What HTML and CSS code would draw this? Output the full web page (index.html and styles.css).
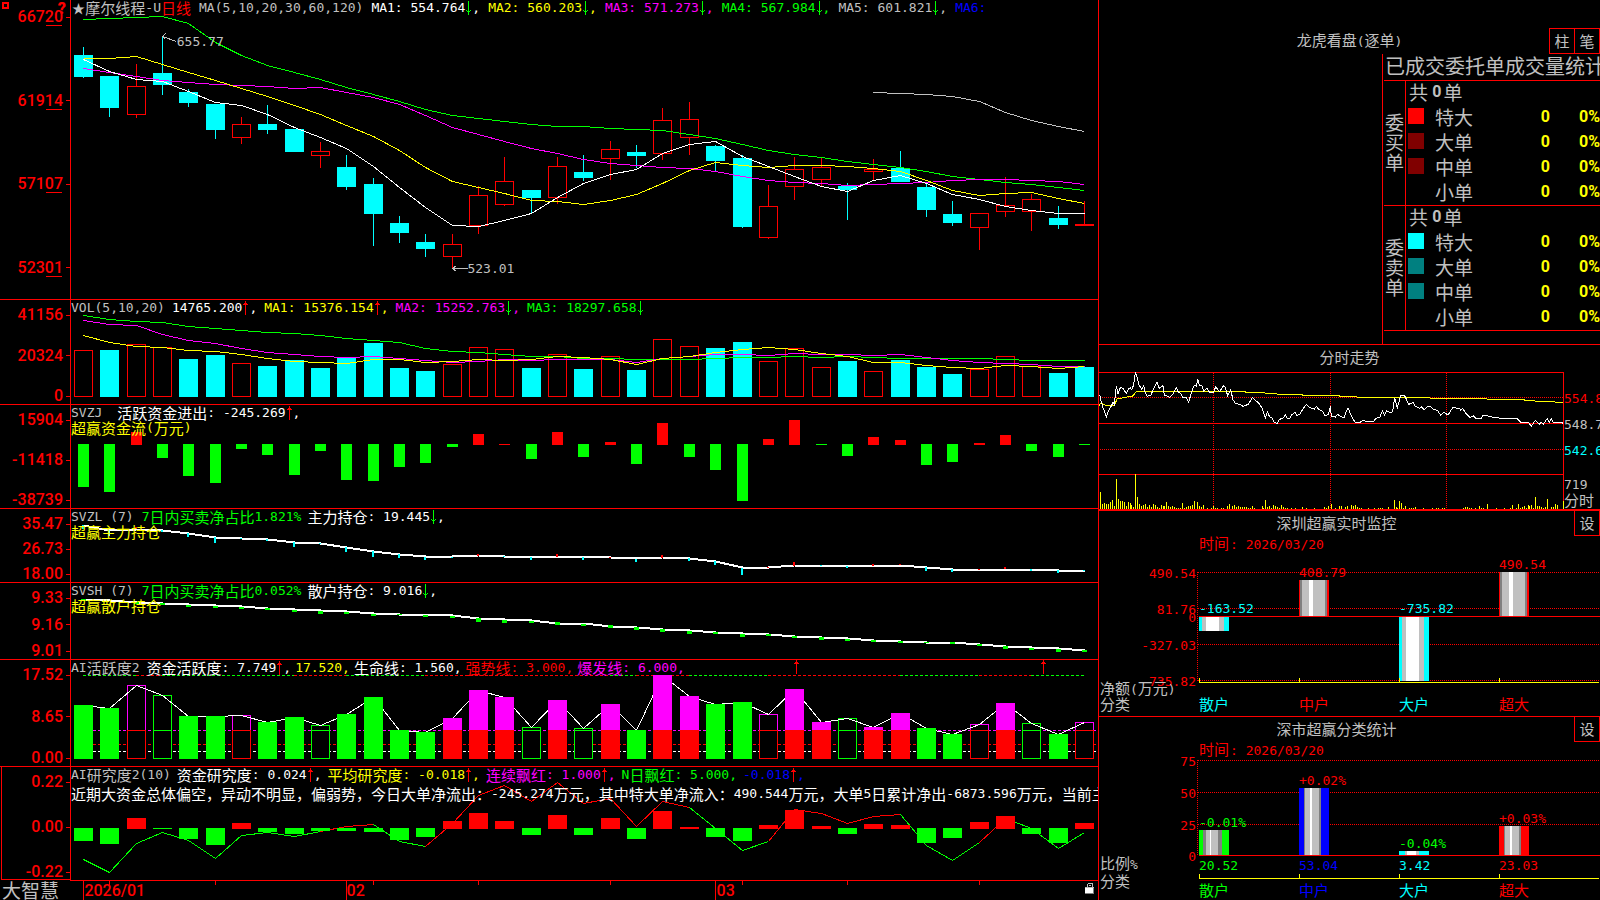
FILE: index.html
```html
<!DOCTYPE html>
<html lang="zh-CN">
<head>
<meta charset="utf-8">
<title>摩尔线程-U 日线</title>
<link rel="stylesheet" href="styles.css">
</head>
<body>
<svg class="defs" aria-hidden="true">
  <symbol id="down" viewBox="0 0 5 14"><path d="M2 0h1v14h-1zM0 9h1v1h1v1h1v-1h1v-1h1v1h-1v1h-1v2h-1v-2h-1v-1h-1z"/></symbol>
  <symbol id="up" viewBox="0 0 5 14"><path d="M2 0h1v14h-1zM1 2h3v1h1v1h-5v-1h1z"/></symbol>
</svg>
<div class="app">
  <main class="left">
    <section class="panel price">
      <div class="axis">
        <div class="corner"><i class="box"></i><b>?</b></div>
        <span>667<u>20</u></span><span>619<u>14</u></span><span>571<u>07</u></span><span>523<u>01</u></span>
      </div>
      <div class="plot">
        <svg id="price" viewBox="0 0 1027 299" preserveAspectRatio="none"></svg>
        <header>
          <div class="row first">
            <h1><span class="star">★</span><span class="cn">摩尔线程</span>-U<span class="cn red">日线</span></h1>
            <span>MA(5,10,20,30,60,120)</span>
            <span class="white">MA1: 554.764<svg class="ar dn"><use href="#down"/></svg>,</span>
            <span class="yellow">MA2: 560.203<svg class="ar dn"><use href="#down"/></svg>,</span>
            <span class="magenta">MA3: 571.273<svg class="ar dn"><use href="#down"/></svg>,</span>
            <span class="green">MA4: 567.984<svg class="ar dn"><use href="#down"/></svg>,</span>
            <span>MA5: 601.821<svg class="ar dn"><use href="#down"/></svg>,</span>
            <span class="blue">MA6:</span>
          </div>
        </header>
        <span class="note high">655.77</span>
        <span class="note low">523.01</span>
      </div>
    </section>

    <section class="panel">
      <div class="axis"><span>41156</span><span>20324</span><span>0</span></div>
      <div class="plot">
        <svg id="vol" viewBox="0 0 1027 104" preserveAspectRatio="none"></svg>
        <header>
          <div class="row volume">
            <span>VOL(5,10,20)</span>
            <span class="white">14765.200<svg class="ar up"><use href="#up"/></svg>,</span>
            <span class="yellow">MA1: 15376.154<svg class="ar up"><use href="#up"/></svg>,</span>
            <span class="magenta">MA2: 15252.763<svg class="ar dn"><use href="#down"/></svg>,</span>
            <span class="green">MA3: 18297.658<svg class="ar dn"><use href="#down"/></svg></span>
          </div>
        </header>
      </div>
    </section>

    <section class="panel">
      <div class="axis"><span>15904</span><span>-11418</span><span>-38739</span></div>
      <div class="plot">
        <svg id="flow" viewBox="0 0 1027 103" preserveAspectRatio="none"></svg>
        <header>
          <div class="row wide">
            <span>SVZJ</span>
            <span class="white"><span class="cn">活跃资金进出</span>: -245.269<svg class="ar up"><use href="#up"/></svg>,</span>
          </div>
          <div class="row yellow"><span><span class="cn">超赢资金流</span>(<span class="cn">万元</span>)</span></div>
        </header>
      </div>
    </section>

    <section class="panel">
      <div class="axis"><span>35.47</span><span>26.73</span><span>18.00</span></div>
      <div class="plot">
        <svg id="main" viewBox="0 0 1027 73" preserveAspectRatio="none"></svg>
        <header>
          <div class="row holders">
            <span>SVZL (7)</span>
            <span class="green">7<span class="cn">日内买卖净占比</span>1.821%</span>
            <span class="white"><span class="cn">主力持仓</span>: 19.445<svg class="ar dn"><use href="#down"/></svg>,</span>
          </div>
          <div class="row yellow"><span class="cn">超赢主力持仓</span></div>
        </header>
      </div>
    </section>

    <section class="panel">
      <div class="axis"><span>9.33</span><span>9.16</span><span>9.01</span></div>
      <div class="plot">
        <svg id="retail" viewBox="0 0 1027 76" preserveAspectRatio="none"></svg>
        <header>
          <div class="row holders">
            <span>SVSH (7)</span>
            <span class="green">7<span class="cn">日内买卖净占比</span>0.052%</span>
            <span class="white"><span class="cn">散户持仓</span>: 9.016<svg class="ar dn"><use href="#down"/></svg>,</span>
          </div>
          <div class="row yellow"><span class="cn">超赢散户持仓</span></div>
        </header>
      </div>
    </section>

    <section class="panel">
      <div class="axis"><span>17.52</span><span>8.65</span><span>0.00</span></div>
      <div class="plot">
        <svg id="active" viewBox="0 0 1027 106" preserveAspectRatio="none"></svg>
        <header>
          <div class="row tight">
            <span>AI<span class="cn">活跃度</span>2</span>
            <span class="white"><span class="cn">资金活跃度</span>: 7.749<svg class="ar up"><use href="#up"/></svg>,</span>
            <span class="yellow">17.520,</span>
            <span class="white"><span class="cn">生命线</span>: 1.560,</span>
            <span class="red"><span class="cn">强势线</span>: 3.000,</span>
            <span class="magenta"><span class="cn">爆发线</span>: 6.000,</span>
          </div>
        </header>
      </div>
    </section>

    <section class="panel selected">
      <div class="axis"><span>0.22</span><span>0.00</span><span>-0.22</span></div>
      <div class="plot">
        <svg id="study" viewBox="0 0 1027 113" preserveAspectRatio="none"></svg>
        <header>
          <div class="row">
            <span>AI<span class="cn">研究度</span>2(10)</span>
            <span class="white"><span class="cn">资金研究度</span>: 0.024<svg class="ar up"><use href="#up"/></svg>,</span>
            <span class="yellow"><span class="cn">平均研究度</span>: -0.018<svg class="ar up"><use href="#up"/></svg>,</span>
            <span class="magenta"><span class="cn">连续飘红</span>: 1.000<svg class="ar up"><use href="#up"/></svg>,</span>
            <span class="green">N<span class="cn">日飘红</span>: 5.000,</span>
            <span class="blue">-0.018<svg class="ar up"><use href="#up"/></svg>,</span>
          </div>
          <p class="summary"><span class="cn">近期大资金总体偏空，异动不明显，偏弱势，今日大单净流出：</span>-245.274<span class="cn">万元，其中特大单净流入：</span>490.544<span class="cn">万元，大单</span>5<span class="cn">日累计净出</span>-6873.596<span class="cn">万元，当前主力</span></p>
        </header>
      </div>
    </section>

    <footer class="foot">
      <span class="brand">大智慧</span>
      <div class="dates">
        <svg id="ticks" viewBox="0 0 1028 19" preserveAspectRatio="none"></svg>
        <time>2026/01</time><time>02</time><time>03</time>
        <svg class="lock" viewBox="0 0 10 12" shape-rendering="crispEdges"><path fill="#c0c0c0" d="M3 0h5v1h-5zM2 1h1v3h-1zM7 1h1v3h-1zM4 2h2v1h-2zM0 4h9v1h-9z"/><path fill="#fff" d="M0 5h8v5h-8z"/><path fill="#808080" d="M8 5h1v6h-9v-1h8z"/></svg>
      </div>
    </footer>
  </main>

  <aside class="right">
    <section class="deals">
      <div class="bar three">
        <h2><span class="cn">龙虎看盘</span>(<span class="cn">逐单</span>)</h2>
        <div class="btns"><button type="button">柱</button><button type="button">笔</button></div>
      </div>
      <div class="tablebox">
        <h3 id="deals-title">已成交委托单成交量统计</h3>
        <table aria-labelledby="deals-title">
          <colgroup><col class="c1"><col class="c2"><col class="c3"><col class="c4"><col class="c5"></colgroup>
          <tbody>
            <tr><th rowspan="5" class="side">委买单</th><td colspan="4" class="sum"><div>共 <b>0</b>单</div></td></tr>
            <tr><td><i class="sw s1"></i></td><td>特大</td><td class="n">0</td><td class="n">0%</td></tr>
            <tr><td><i class="sw s2"></i></td><td>大单</td><td class="n">0</td><td class="n">0%</td></tr>
            <tr><td><i class="sw s2"></i></td><td>中单</td><td class="n">0</td><td class="n">0%</td></tr>
            <tr><td></td><td>小单</td><td class="n">0</td><td class="n">0%</td></tr>
          </tbody>
          <tbody>
            <tr><th rowspan="5" class="side">委卖单</th><td colspan="4" class="sum"><div>共 <b>0</b>单</div></td></tr>
            <tr><td><i class="sw s3"></i></td><td>特大</td><td class="n">0</td><td class="n">0%</td></tr>
            <tr><td><i class="sw s4"></i></td><td>大单</td><td class="n">0</td><td class="n">0%</td></tr>
            <tr><td><i class="sw s4"></i></td><td>中单</td><td class="n">0</td><td class="n">0%</td></tr>
            <tr><td></td><td>小单</td><td class="n">0</td><td class="n">0%</td></tr>
          </tbody>
        </table>
      </div>
    </section>
    <section class="trend">
      <h2 class="cn">分时走势</h2>
      <svg id="trend" viewBox="1099 372 501 137" preserveAspectRatio="xMinYMin meet"></svg>
    </section>
    <section class="monitor">
      <div class="bar"><h2 class="cn">深圳超赢实时监控</h2><button type="button">设</button></div>
      <svg id="monitor" viewBox="1099 536 501 180" preserveAspectRatio="xMinYMin meet"></svg>
    </section>
    <section class="stats">
      <div class="bar"><h2 class="cn">深市超赢分类统计</h2><button type="button">设</button></div>
      <svg id="stats" viewBox="1099 742 501 158" preserveAspectRatio="xMinYMin meet"></svg>
    </section>
  </aside>
</div>
<script src="charts.js"></script>
</body>
</html>
```
FILE: styles.css
```css
* { box-sizing: border-box; }
body {
  margin: 0;
  background: #000;
  color: #c0c0c0;
  font: 13px/15px "DejaVu Sans Mono", "Noto Sans CJK SC", monospace;
  overflow: hidden;
}
h1, h2, h3, p { margin: 0; font: inherit; }
svg { display: block; }
.defs { width: 0; height: 0; position: absolute; }
.app {
  display: grid;
  grid-template-columns: 1098fr 502fr;
  height: 100vh;
}
.cn { font-family: "Noto Sans CJK SC", sans-serif; font-size: 15px; font-weight: 400; }
.white { color: #fff; }
.yellow { color: #ff0; }
.magenta { color: #f0f; }
.green { color: #0f0; }
.red { color: #f00; }
.blue { color: #00f; }

/* left side: stacked indicator panels */
.left {
  display: grid;
  grid-template-rows: 299fr 105fr 104fr 74fr 77fr 107fr 114fr 20px;
  min-width: 0;
  min-height: 0;
}
.panel {
  display: grid;
  grid-template-columns: 70px 1fr;
  border-top: 1px solid #f00;
  min-height: 0;
}
.price { border-top: 0; }
.axis {
  display: flex;
  flex-direction: column;
  justify-content: space-between;
  padding-top: 7px;
  color: #f00;
  font: 500 16px/16px Roboto, sans-serif;
}
.price .axis { padding: 9px 0 23px; position: relative; }
.axis > span { display: flex; justify-content: flex-end; align-items: center; }
.axis > span::after { content: ""; width: 4px; height: 1px; margin-left: 3px; background: #f00; }
.axis u { text-decoration: none; box-shadow: 0 2px 0 -1px #f00; }
.corner { position: absolute; top: 0; left: 0; width: 66px; display: flex; justify-content: space-between; padding-left: 2px; }
.corner .box { width: 7px; height: 7px; margin-top: 2px; border: 2px solid #f00; }
.corner b { padding-top: 1px; font-weight: 900; }
.selected .axis { border: 1px solid #f00; border-width: 0 0 0 1px; margin-left: 1px; box-shadow: inset 0 -1px 0 #f00; }
.plot {
  display: grid;
  position: relative;
  border-left: 1px solid #f00;
  overflow: hidden;
  min-width: 0;
  min-height: 0;
}
.plot > svg, .plot > header { grid-area: 1 / 1; min-width: 0; min-height: 0; }
.plot > svg { width: 100%; height: 100%; }
.row { display: flex; gap: 6px; white-space: nowrap; height: 15px; }
.row > span, .row h1 { display: flex; align-items: center; white-space: pre; height: 15px; }
.row.wide { gap: 15px; }
.row.volume { gap: 7px; }
.row.tight { gap: 4px; }
.row.tight > :first-child { margin-right: 3px; }
.row.holders > :first-child { margin-right: 2px; }
.row.first { gap: 8px; padding-left: 1px; }
.row h1 { width: 119px; }
.star { width: 14px; font: 13px/15px "Noto Sans CJK SC", sans-serif; }
.ar { width: 5px; height: 14px; margin: 0 1px; }
.dn { fill: #0f0; }
.up { fill: #f00; }
.summary { margin-top: 4px; color: #fff; white-space: nowrap; line-height: 15px; display: flex; }
.note { position: absolute; }
.high { left: 10.3%; top: 34px; }
.low { left: 38.6%; top: 261px; }

.foot { display: grid; grid-template-columns: 70px 1fr; }
.brand { font: 400 19px/19px "Noto Sans CJK SC", sans-serif; padding-left: 2px; }
.dates {
  border-top: 1px solid #f00;
  position: relative;
  color: #f00;
  font: 500 16px/20px Roboto, sans-serif;
}
.dates > svg:first-child { width: 100%; height: 100%; }
time { position: absolute; top: 0; }
time:nth-of-type(1) { left: 1.4%; }
time:nth-of-type(2) { left: 26.9%; }
time:nth-of-type(3) { left: 62.9%; }
.lock { position: absolute; right: 3px; top: 2px; width: 10px; height: 12px; }

/* right side */
.right {
  display: grid;
  grid-template-rows: 345fr 166fr 206fr 183fr;
  border-left: 1px solid #f00;
  min-width: 0;
  min-height: 0;
}
.right section { display: flex; flex-direction: column; min-height: 0; min-width: 0; overflow: hidden; }
.right section > svg { width: 100%; flex: 1; min-height: 0; }
.right h2 { text-align: center; }
.deals, .monitor { border-bottom: 1px solid #f00; }
.trend { border-bottom: 2px solid #f00; }
.trend h2 { line-height: 24px; margin-bottom: 3px; }
.bar { display: flex; height: 25px; }
.bar h2 { flex: 1; line-height: 24px; }
button {
  width: 26px;
  height: 25px;
  padding: 0;
  background: #000;
  color: #c0c0c0;
  border: 1px solid #f00;
  border-top: 0;
  font: 400 15px/20px "Noto Sans CJK SC", sans-serif;
}
.bar.three { display: grid; grid-template-columns: 1fr auto 1fr; margin-top: 28px; height: 26px; }
.bar.three h2 { grid-column: 2; }
.btns { grid-column: 3; justify-self: end; display: flex; }
.btns button { border-top: 1px solid #f00; height: 26px; }
.btns button + button { border-left: 0; width: 25px; }
.tablebox {
  margin-left: 283px;
  border-left: 1px solid #f00;
  flex: 1;
  padding-left: 1px;
  overflow: hidden;
  font: 400 19px/24px "Noto Sans CJK SC", sans-serif;
}
h3 { height: 26px; font-size: 20px; padding-left: 1px; white-space: nowrap; }
table {
  width: 100%;
  table-layout: fixed;
  border-spacing: 0;
  border-bottom: 1px solid #f00;
}
th, td { padding: 0 0 3px; height: 25px; font-weight: 400; text-align: left; white-space: nowrap; line-height: 21px; }
tbody tr:first-child > * { border-top: 1px solid #f00; }
.c1 { width: 22px; }
.c2 { width: 29px; }
.c3 { width: 50px; }
.c4 { width: 65px; }
.side { border-right: 1px solid #f00; white-space: normal; line-height: 20px; word-break: break-all; padding-left: 1px; }
.sum div { display: flex; align-items: center; height: 21px; padding-left: 3px; white-space: pre; }
.sum b, .n { font: bold 16px/21px Roboto, sans-serif; }
.sum b { padding-right: 2px; }
.n { color: #ff0; text-align: right; }
.sw { display: block; width: 16px; height: 16px; margin-left: 2px; }
.s1 { background: #f00; }
.s2 { background: #800000; }
.s3 { background: #0ff; }
.s4 { background: #008080; }
svg text { font: 13px "DejaVu Sans Mono", monospace; white-space: pre; }
svg text .k, svg text.k { font: 400 15px "Noto Sans CJK SC", sans-serif; }
```
FILE: charts.js
```js
// Series heights are kept in thirds of a pixel; each panel has its own offset.
const NS = 'http://www.w3.org/2000/svg';
const R = '#f00', G = '#0f0', C = '#0ff', W = '#fff', Y = '#ff0', M = '#f0f', GR = '#c0c0c0', B = '#00f';
const cx = i => 12 + Math.round(i * 26.34);

function el(svg, tag, attrs, text) {
  const e = document.createElementNS(NS, tag);
  for (const k in attrs) e.setAttribute(k, attrs[k]);
  if (text !== undefined) e.textContent = text;
  svg.appendChild(e);
  return e;
}
const rect = (s, x, y, w, h, fill) => el(s, 'rect', { x, y, width: w, height: h, fill, 'shape-rendering': 'crispEdges' });
const hollow = (s, x, y, w, h, c, fill) => el(s, 'rect', { x: x + .5, y: y + .5, width: w - 1, height: h - 1, fill: fill || '#000', stroke: c, 'shape-rendering': 'crispEdges' });
const path = (s, pts, c, w, dash) => el(s, 'polyline', { points: pts.map(p => p.join()).join(' '), fill: 'none', stroke: c, 'stroke-width': w || 1, 'stroke-dasharray': dash || 'none', 'shape-rendering': 'crispEdges' });
const at = off => v => off + Math.round(v / 3);
const series = (s, y, vals, c, w, from = 0) => path(s, vals.map((v, i) => [cx(i + from) + .5, y(v - 1) + .5]), c, w);

// price
{
  const s = document.getElementById('price'), y = at(0);
  const d = 'c141 165 231 234,c228 228 324 351,r192 258 345 354,c108 219 255 285,c267 276 309 321,c312 312 390 417,r351 372 414 432,c315 372 390 402,c387 387 456 456,r426 453 468 504,c465 501 561 570,c534 552 642 738,c648 669 699 729,c702 726 747 771,r702 732 771 804,r558 585 678 702,r471 543 615 618,c570 570 594 640,r471 498 594 612,c465 516 534 543,r423 447 477 540,c435 456 468 504,r324 360 462 480,r306 357 414 465,c435 438 483 513,c465 474 681 684,r555 618 714 717,r471 507 561 600,r472 501 540 558,c549 558 570 660,r477 507 516 540,c453 504 546 546,c546 561 630 651,c603 642 669 678,r639 639 684 750,r531 615 636 651,r582 597 636 693,c618 654 675 687,r603 672 678 678'.split(',');
  d.forEach((t, i) => {
    const c = t[0] === 'c' ? C : R;
    const [h, o, e, l] = t.slice(1).split(' ').map(y);
    rect(s, cx(i), h, 1, l - h, c);
    if (c === C) rect(s, cx(i) - 9, o, 19, e - o, c);
    else hollow(s, cx(i) - 9, o, 19, e - o, c);
  });
  series(s, y, [58,54,51,48,70,127,166,197,218,239,262,282,305,329,346,356,365,374,379,380,385,388,391,402,414,433,451,463,471,484,493,502,514,529,537,547,553,562,571], G);
  series(s, y, [205,217,230,241,247,252,256,259,265,262,277,292,312,345,382,403,425,445,461,478,490,497,502,506,514,530,541,547,550,557,553,550,546,542,539,538,542,545,553], M);
  series(s, y, [175,175,168,193,217,240,265,289,315,343,375,408,451,502,543,562,580,600,604,613,600,583,550,512,487,496,502,496,496,499,505,515,540,570,586,580,576,595,610], Y);
  series(s, y, [178,213,237,243,273,306,317,343,381,412,446,500,563,621,675,680,660,640,593,550,523,508,461,433,424,470,500,530,558,573,542,527,549,583,598,619,630,639,639], W);
  series(s, y, [277,280,282,289,304,337,360,379,394], GR, 1, 30);
  el(s, 'path', { d: 'M91.5 36.5l3-3M91.5 36.5l3 3M91.5 36.5l14 5M381.5 268.5h15M381.5 268.5l4-3M381.5 268.5l4 3', stroke: GR, fill: 'none', 'shape-rendering': 'crispEdges' });
}
// volume
{
  const s = document.getElementById('vol'), y = at(-10);
  'r180,c180,r162,r171,c207,c195,r219,c228,c210,c234,c204,c159,c234,c243,r222,r171,r177,c234,r192,c237,r198,c240,r147,r168,c174,c156,r213,r174,r231,c213,r243,c210,c231,c252,r237,r198,r228,c249,c231'.split(',').forEach((t, i) => {
    const v = y(+t.slice(1)), h = 97 - v;
    t[0] === 'c' ? rect(s, cx(i) - 9, v, 19, h, C) : hollow(s, cx(i) - 9, v, 19, h, R);
  });
  series(s, y, [76,88,94,98,109,115,121,126,130,136,144,151,158,175,184,187,193,199,200,205,206,208,208,208,205,202,202,199,202,199,202,205,205,205,205,208,211,211,211], G);
  series(s, y, [91,103,107,133,151,160,174,186,193,198,202,199,206,212,217,214,208,211,208,208,208,216,206,199,193,193,196,190,193,193,196,193,202,210,216,220,223,229,229], M);
  series(s, y, [136,157,168,172,181,184,193,205,213,217,220,208,208,217,213,208,211,208,200,202,208,223,205,198,187,178,172,178,190,199,217,217,227,232,235,226,229,235,229], Y);
}
// capital flow
{
  const s = document.getElementById('flow'), y = at(-115);
  'g591,g606,r426,g504,g558,g579,g477,g495,g555,g483,g570,g573,g531,g519,g471,r432,r462,g507,r426,g501,r456,g522,r399,g501,g540,g633,r447,r390,g465,g498,r441,r450,g525,g516,r459,r435,g483,g501,g465'.split(',').forEach((t, i) => {
    const v = y(+t.slice(1));
    t[0] === 'g' ? rect(s, cx(i) - 5, 39, 11, v - 39, G) : rect(s, cx(i) - 5, v, 11, 40 - v, R);
  });
}
// main holders
{
  const s = document.getElementById('main'), y = at(-219);
  const base = [705,720,717,721,730,742,745,748,757,760,771,783,793,800,800,797,798,800,800,800,802,806,803,804,813,833,833,827,825,827,827,825,831,837,837,837,837,840,840];
  series(s, y, base, W, 2);
  'c718,c738,r712,c726,c741,c758,c746,c752,c771,c763,c786,c801,c804,c810,c804,r792,c800,c810,r792,c810,r801,c816,r795,c813,c825,c855,r831,r816,c828,c834,r822,r822,c843,c846,r838,r831,c843,c849,c843'.split(',').forEach((t, i) => {
    const v = y(+t.slice(1)), b = y(base[i]);
    rect(s, cx(i) - 1, Math.min(v, b), 2, Math.max(1, Math.abs(v - b)), t[0] === 'c' ? C : R);
  });
}
// retail holders
{
  const s = document.getElementById('retail'), y = at(-3);
  const base = [57,62,66,70,74,77,80,85,89,92,95,101,102,104,107,116,119,122,129,131,139,143,149,152,157,161,163,169,173,176,181,184,186,187,193,200,203,206,211];
  const tick = [6,0,6,5,5,5,5,5,5,8,5,5,3,5,5,12,8,5,9,6,9,9,9,8,5,8,5,6,9,6,6,6,3,6,6,9,6,8,5];
  series(s, y, base, W, 2);
  tick.forEach((t, i) => rect(s, cx(i) - 2, y(base[i]) - (t > 8 ? 1 : 0), 5, Math.round(t / 3), G));
}
// activity
{
  const s = document.getElementById('active'), y = at(-80);
  const d = 'G375,G384,m315,g345,G408,G408,m405,G426,G411,g435,G402,G351,G450,G456,M414,M330,M351,g441,M360,g444,M372,G450,M285,M348,G372,G366,m402,M327,M426,g414,M441,M399,G444,G462,m432,M369,g429,G462,m426'.split(',');
  [[451, M], [493, R], [514, W]].forEach(([v, c]) => path(s, [[12, y(v - 1) + .5], [1027, y(v - 1) + .5]], c, 1, '3 2'));
  [[0,2,G],[2,3,R],[3,8,G],[8,10,R],[10,13,G],[13,20,R],[20,21,G],[21,23,R],[23,26,G],[26,31,R],[31,34,G],[34,36,R],[36,38,G]].forEach(([a, b, c]) =>
    path(s, [[cx(a), y(285) + .5], [cx(b), y(285) + .5]], c, 1, '3 2'));
  const box = (t, i) => {
    const v = y(+t.slice(1)), x = cx(i) - 9, k = t[0], m = 70;
    if (k === 'G') rect(s, x, v, 19, 99 - v, G);
    if (k === 'M') { rect(s, x, v, 19, 99 - v, M); rect(s, x, m, 19, 99 - m, R); }
    if (k === 'g') { hollow(s, x, v, 19, 99 - v, G); rect(s, x, m, 19, 1, G); }
    if (k === 'm') { hollow(s, x, v, 19, 99 - v, M); hollow(s, x, m, 19, 99 - m, R); }
  };
  const hol = t => t[0] === 'g' || t[0] === 'm';
  d.forEach((t, i) => hol(t) && box(t, i));
  series(s, y, d.map(t => +t.slice(1) + 1), W);
  d.forEach((t, i) => !hol(t) && box(t, i));
  [725, 972].forEach(x => el(s, 'path', { d: `M${x} 0h1v14h-1zM${x - 1} 2h3v1h1v1h-5v-1h1z`, fill: R, 'shape-rendering': 'crispEdges' }));
}
// research
{
  const s = document.getElementById('study'), y = at(-187);
  const v = [838,877,791,757,781,834,767,757,769,755,740,733,784,799,730,645,616,663,607,670,655,740,664,682,744,811,784,688,700,731,709,703,796,841,787,715,745,805,756];
  [[0,9,G],[9,11,R],[11,13,G],[13,23,R],[23,26,G],[26,31,R],[31,34,G],[34,35,R],[35,38,G]].forEach(([a, b, c]) => series(s, y, v.slice(a, b + 1), c, 1, a));
  'g783,g792,r714,g747,g777,g795,r729,g756,g762,g753,g753,g756,g780,g771,r723,r699,r723,g765,r705,g765,r714,g777,r693,r741,g771,g783,r735,r690,r738,g762,r732,r735,g789,g774,r726,r708,g762,g789,r729'.split(',').forEach((t, i) => {
    const h = y(+t.slice(1));
    t[0] === 'g' ? rect(s, cx(i) - 9, 61, 19, h - 61, G) : rect(s, cx(i) - 9, h, 19, 62 - h, R);
  });
}
// date ticks
{
  const s = document.getElementById('ticks');
  [0, 10, 24].forEach(i => rect(s, cx(i) + 1, 0, 1, 19, R));
  [1, 5, 11, 15, 20, 25, 29, 34].forEach(i => rect(s, cx(i) + 1, 0, 1, 4, R));
}
const label = (s, x, y, t, c, anchor, cls) => el(s, 'text', { x, y: y + 5, fill: c, 'text-anchor': anchor || 'start', class: cls || '' }, t);
const dot = (s, x1, y1, x2, y2) => el(s, 'line', { x1, y1, x2, y2, stroke: R, 'stroke-dasharray': '1 1', 'shape-rendering': 'crispEdges' });

// intraday trend
{
  const s = document.getElementById('trend');
  [397.5, 449.5].forEach(v => dot(s, 1100, v, 1563, v));
  [1213.5, 1330.5, 1446.5].forEach(v => dot(s, v, 373, v, 509));
  [372, 423, 474].forEach(v => rect(s, 1099, v, 465, 1, R));
  rect(s, 1563, 372, 1, 137, R);
  const line = t => t.split(' ').map(p => p.split(',').map(Number));
  const a = line('12,92 15,92 18,108 24,128 34,155 40,138 48,125 54,112 58,118 62,80 64,64 69,86 76,68 84,70 94,86 102,70 106,68 110,74 116,60 121,22 126,36 132,60 140,72 146,62 150,80 157,94 168,90 176,70 186,52 193,70 204,62 208,90 224,97 234,88 244,68 250,82 258,86 262,96 274,98 281,112 290,80 298,60 304,64 308,43 314,62 320,60 326,78 336,70 344,82 354,84 362,66 374,80 386,62 390,66 398,92 407,74 414,104 422,116 434,118 444,124 460,118 472,98 484,108 494,118 502,130 511,160 517,140 524,156 530,158 538,172 547,176 552,164 566,158 571,150 577,160 584,160 590,150 600,142 606,151 614,148 624,132 634,118 644,128 658,132 664,124 672,134 682,138 690,152 700,148 706,124');
  const b = line('4,154 16,156 22,148 32,154 42,158 48,140 54,128 60,144 68,160 76,172 90,172 98,166 114,170 132,168 138,160 150,156 157,138 163,150 170,138 182,144 188,140 194,98 202,128 212,92 224,92 236,118 250,112 256,124 268,130 274,126 282,134 294,124 302,126 312,134 322,136 332,150 342,142 354,150 368,128 388,130 392,136 398,130 408,146 420,158 430,152 438,160 454,160 460,150 478,154 486,156 500,156 508,160 560,160 572,172 596,172 604,184 616,166 628,178 634,172 640,178 652,160 658,172 664,162 670,172 696,172 699,176').map(p => [p[0] + 705, p[1]]);
  const avg = line('12,124 16,114 30,120 58,122 66,102 90,97 112,94 124,80 450,80 455,83 508,83 512,86 545,86 548,88 620,88 624,91 730,91 735,94 784,94 788,97 1003,97 1007,100 1174,100 1178,103 1285,103 1290,106 1318,106 1322,109 1378,109 1382,112 1405,112');
  const px = p => [1095 + p[0] / 3, 365 + p[1] / 3];
  path(s, avg.map(px), Y);
  path(s, a.concat(b).map(px), W);
  const v1 = '16,381 22,417 28,414 34,417 40,417 46,411 52,405 58,423 64,342 70,402 76,408 82,408 88,411 94,423 100,411 106,414 109,420 115,426 121,327 127,396 133,417 139,423 145,420 151,417 157,426 163,420 169,427 175,417 181,420 187,426 193,429 199,420 205,423 208,423 214,411 220,423 226,426 232,423 238,426 244,429 250,429 256,429 262,414 268,429 274,426 280,423 286,423 292,420 298,408 307,411 313,423 319,426 325,420 337,429 349,429 355,423 361,429 367,429 379,429 385,429 397,423 403,417 412,423 418,420 424,426 430,423 436,426 442,426 448,426 454,426 460,429 466,429 472,423 478,429 502,423 505,429 511,405 517,426 523,423 529,429 535,420 541,423 547,426 553,429 559,420 565,426 571,429 577,429 589,429 601,429 622,426 634,429 658,429 688,426 694,429 700,423 709,417';
  const v2 = '16,429 28,423 34,423 46,426 52,423 64,420 70,423 76,420 82,426 88,429 94,429 115,429 133,429 145,429 151,429 157,429 175,426 193,405 199,426 202,429 208,408 214,414 220,429 226,423 238,429 244,429 250,429 256,426 280,429 307,429 319,429 325,429 337,429 343,429 400,429 406,426 412,426 418,429 424,429 436,429 448,423 454,429 460,429 472,417 499,429 523,429 541,429 547,420 559,429 565,417 571,429 577,426 583,423 589,429 595,420 598,423 604,420 610,429 616,396 622,423 628,423 634,426 640,429 646,426 652,402 664,426 670,426 676,417 682,420 700,408';
  line(v1).concat(line(v2).map(p => [p[0] + 705, p[1]])).forEach(([x, t]) => {
    const top = 365 + Math.round(t / 3);
    rect(s, 1095 + Math.floor(x / 3), top, 1, 509 - top, Y);
  });
  label(s, 1564, 398, '554.86', R);
  label(s, 1564, 424, '548.77', GR);
  label(s, 1564, 450, '542.68', C);
  label(s, 1564, 484, '719', GR);
  label(s, 1564, 501, '分时', GR, 'start', 'k');
}

function when(s, y) {
  label(s, 1199, y, '时间', R, 'start', 'k');
  label(s, 1230, y, ': 2026/03/20', R);
}
// a bar with metallic stripes: [x, width, colour]
function bar(s, x, y, h, base, stripes) {
  rect(s, x, y, 30, h, base);
  stripes.forEach(([dx, w, c]) => rect(s, x + dx, y, w, h, c));
}
function xaxis(s, y) {
  rect(s, 1199, y, 400, 1, Y);
  [1199, 1299, 1399, 1499].forEach(x => rect(s, x, y - 4, 1, 4, Y));
}
// realtime monitor
{
  const s = document.getElementById('monitor');
  when(s, 544);
  dot(s, 1197.5, 572, 1197.5, 682);
  [572.5, 608.5, 644.5, 680.5].forEach(v => dot(s, 1198, v, 1600, v));
  [['490.54', 573], ['81.76', 609], ['0', 617], ['-327.03', 645], ['-735.82', 681]].forEach(([t, v]) => label(s, 1196, v, t, R, 'end'));
  const up = [[1, 2, '#808080'], [3, 7, GR], [10, 4, W], [14, 12, GR], [26, 2, '#808080']];
  const dn = [[3, 4, GR], [7, 13, W], [20, 5, GR]];
  bar(s, 1199, 617, 14, C, dn);
  bar(s, 1299, 580, 36, R, up);
  bar(s, 1399, 617, 64, C, dn);
  bar(s, 1499, 572, 44, R, up);
  rect(s, 1199, 616, 401, 1, R);
  xaxis(s, 682);
  label(s, 1199, 608, '-163.52', C);
  label(s, 1299, 572, '408.79', R);
  label(s, 1399, 608, '-735.82', C);
  label(s, 1499, 564, '490.54', R);
  const n = label(s, 1100, 689, '', GR);
  el(n, 'tspan', { class: 'k' }, '净额'); el(n, 'tspan', {}, '('); el(n, 'tspan', { class: 'k' }, '万元'); el(n, 'tspan', {}, ')');
  label(s, 1100, 705, '分类', GR, 'start', 'k');
  [['散户', C], ['中户', R], ['大户', C], ['超大', R]].forEach(([t, c], i) => label(s, 1199 + i * 100, 705, t, c, 'start', 'k'));
}
// category statistics
{
  const s = document.getElementById('stats');
  when(s, 750);
  dot(s, 1197.5, 760, 1197.5, 856);
  [760.5, 792.5, 824.5].forEach(v => dot(s, 1198, v, 1600, v));
  [['75', 761], ['50', 793], ['25', 825], ['0', 856]].forEach(([t, v]) => label(s, 1196, v, t, R, 'end'));
  const D = '#808080';
  bar(s, 1199, 830, 25, G, [[4, 3, D], [7, 4, GR], [11, 1, W], [12, 7, GR], [19, 4, D]]);
  bar(s, 1299, 788, 67, B, [[5, 1, D], [6, 5, GR], [11, 2, W], [13, 7, GR], [20, 2, D]]);
  bar(s, 1399, 851, 4, C, [[6, 2, GR], [8, 9, W], [17, 3, GR]]);
  bar(s, 1499, 826, 29, R, [[5, 1, D], [6, 5, GR], [11, 2, W], [13, 7, GR], [20, 2, D]]);
  rect(s, 1199, 855, 401, 1, R);
  xaxis(s, 878);
  [['散户', G, '-0.01%', 822, '20.52'], ['中户', B, '+0.02%', 780, '53.04'], ['大户', C, '-0.04%', 843, '3.42'], ['超大', R, '+0.03%', 818, '23.03']].forEach(([t, c, p, y, v], i) => {
    const x = 1199 + i * 100;
    label(s, x, y, p, i % 2 ? R : G);
    label(s, x, 865, v, c);
    label(s, x, 891, t, c, 'start', 'k');
  });
  label(s, 1100, 864, '比例', GR, 'start', 'k');
  label(s, 1130, 864, '%', GR);
  label(s, 1100, 882, '分类', GR, 'start', 'k');
}
```
